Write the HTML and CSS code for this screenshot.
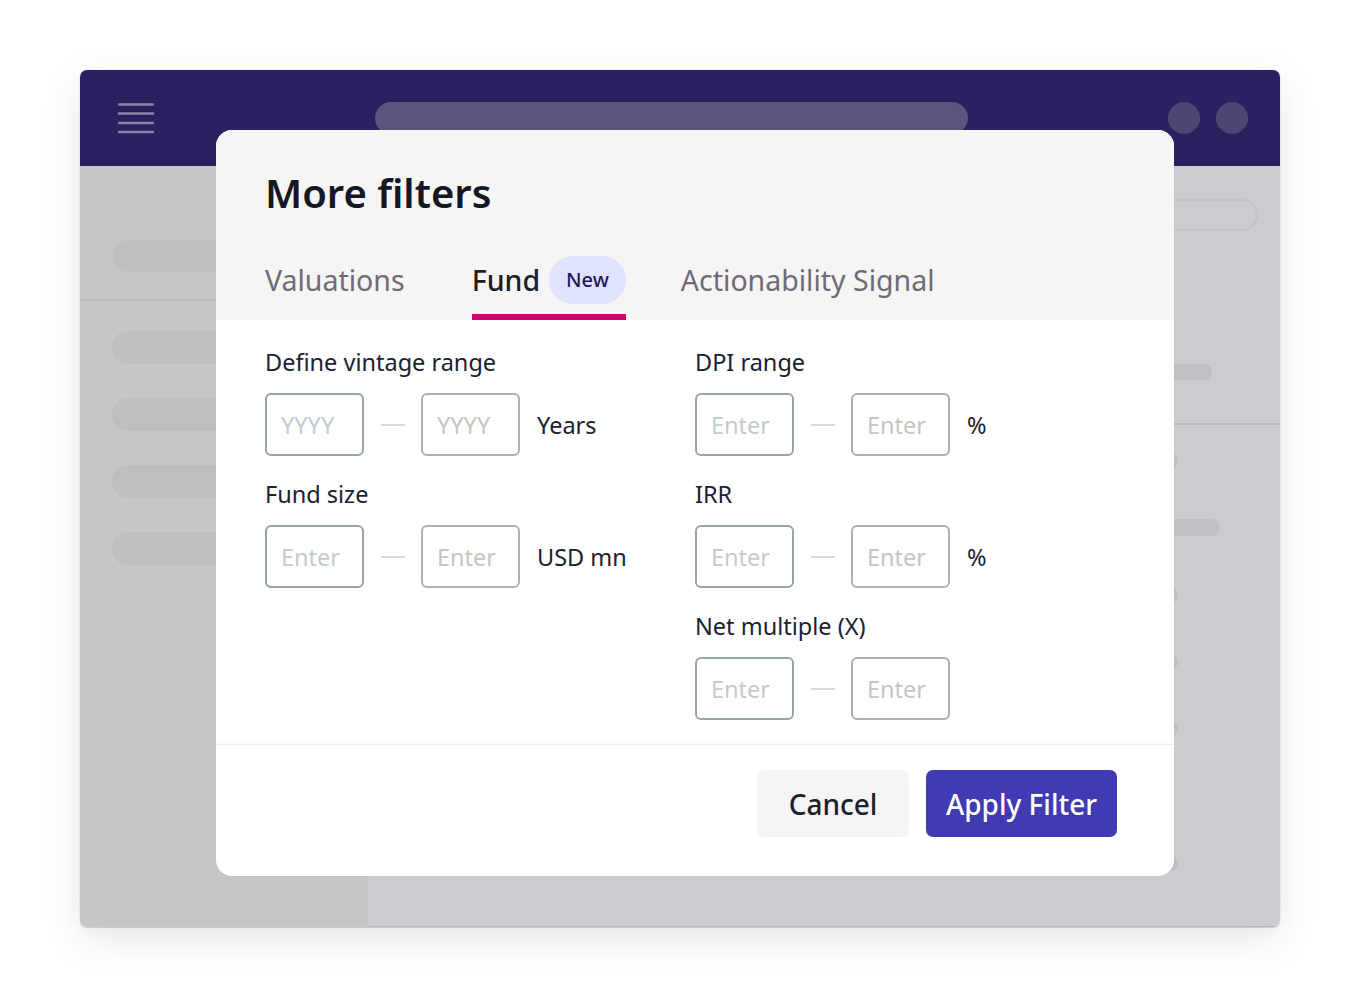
FILE: index.html
```html
<!DOCTYPE html>
<html lang="en">
<head>
    <meta charset="UTF-8">
    <meta name="viewport" content="width=device-width, initial-scale=1.0">
    <title>More filters</title>
    <link rel="stylesheet" href="styles.css">
</head>
<body>
    <div class="app-frame">
        <div class="topbar">
            <svg class="menu-icon" width="36" height="31" viewBox="0 0 36 31">
                <g stroke="#8b83a9" stroke-width="2.4">
                    <line x1="0" y1="1.5" x2="36" y2="1.5"/>
                    <line x1="0" y1="10.5" x2="36" y2="10.5"/>
                    <line x1="0" y1="20" x2="36" y2="20"/>
                    <line x1="0" y1="29" x2="36" y2="29"/>
                </g>
            </svg>
            <div class="search-pill"></div>
            <div class="avatars">
                <span class="avatar"></span>
                <span class="avatar"></span>
            </div>
        </div>

        <div class="app-body">
            <aside class="sidebar">
                <div class="side-pill"></div>
                <div class="side-divider"></div>
                <div class="side-list">
                    <div class="side-pill"></div>
                    <div class="side-pill"></div>
                    <div class="side-pill"></div>
                    <div class="side-pill"></div>
                </div>
            </aside>
            <main class="main">
                <div class="main-head">
                    <div class="outline-pill"></div>
                    <div class="head-pill"></div>
                </div>
                <div class="main-divider"></div>
                <div class="rows">
                    <div class="row"><span class="row-pill"></span></div>
                    <div class="row"><span class="row-pill wide"></span></div>
                    <div class="row"><span class="row-pill"></span></div>
                    <div class="row"><span class="row-pill"></span></div>
                    <div class="row"><span class="row-pill"></span></div>
                    <div class="row"></div>
                    <div class="row"><span class="row-pill"></span></div>
                </div>
            </main>
        </div>

        <div class="modal">
            <div class="modal-header">
                <h1>More filters</h1>
                <div class="tabs">
                    <div class="tab">Valuations</div>
                    <div class="tab active">Fund <span class="badge">New</span></div>
                    <div class="tab">Actionability Signal</div>
                </div>
            </div>

            <div class="modal-body">
                <div class="column">
                    <div class="field">
                        <label>Define vintage range</label>
                        <div class="range">
                            <input class="box from" type="text" placeholder="YYYY">
                            <span class="dash"></span>
                            <input class="box to" type="text" placeholder="YYYY">
                            <span class="unit">Years</span>
                        </div>
                    </div>
                    <div class="field">
                        <label>Fund size</label>
                        <div class="range">
                            <input class="box from" type="text" placeholder="Enter">
                            <span class="dash"></span>
                            <input class="box to" type="text" placeholder="Enter">
                            <span class="unit">USD mn</span>
                        </div>
                    </div>
                </div>
                <div class="column">
                    <div class="field">
                        <label>DPI range</label>
                        <div class="range">
                            <input class="box from" type="text" placeholder="Enter">
                            <span class="dash"></span>
                            <input class="box to" type="text" placeholder="Enter">
                            <span class="unit">%</span>
                        </div>
                    </div>
                    <div class="field">
                        <label>IRR</label>
                        <div class="range">
                            <input class="box from" type="text" placeholder="Enter">
                            <span class="dash"></span>
                            <input class="box to" type="text" placeholder="Enter">
                            <span class="unit">%</span>
                        </div>
                    </div>
                    <div class="field">
                        <label>Net multiple (X)</label>
                        <div class="range">
                            <input class="box from" type="text" placeholder="Enter">
                            <span class="dash"></span>
                            <input class="box to" type="text" placeholder="Enter">
                        </div>
                    </div>
                </div>
            </div>

            <div class="modal-footer">
                <button class="btn cancel">Cancel</button>
                <button class="btn apply">Apply Filter</button>
            </div>
        </div>
    </div>
</body>
</html>
```

FILE: styles.css
```css
* {
    margin: 0;
    padding: 0;
    box-sizing: border-box;
}

body {
    font-family: 'Noto Sans', 'Open Sans', sans-serif;
    background: #fff;
    padding: 70px 80px;
    color: #1d2030;
}

.app-frame {
    position: relative;
    width: 1200px;
    height: 857px;
    border-radius: 7px;
    box-shadow: 0 0 0 1px rgba(0, 0, 0, 0.04), 0 1px 1px rgba(0, 0, 0, 0.12), 0 12px 40px rgba(0, 0, 0, 0.1);
    display: flex;
    flex-direction: column;
}

/* top bar */
.topbar {
    height: 96px;
    background: #2d2060;
    border-radius: 7px 7px 0 0;
    display: flex;
    align-items: center;
    padding: 0 32px 0 38px;
}

.menu-icon {
    display: block;
    margin-right: 221px;
}

.search-pill {
    width: 593px;
    height: 32px;
    border-radius: 16px;
    background: #5d547c;
}

.avatars {
    margin-left: auto;
    display: flex;
    gap: 16px;
}

.avatar {
    width: 32px;
    height: 32px;
    border-radius: 50%;
    background: #4e4574;
}

/* app content behind the modal */
.app-body {
    flex: 1;
    display: flex;
    border-radius: 0 0 7px 7px;
    overflow: hidden;
}

.sidebar {
    width: 288px;
    background: #c6c6c8;
    padding-top: 74px;
}

.sidebar > .side-pill {
    margin-left: 32px;
}

.side-pill {
    width: 220px;
    height: 32px;
    border-radius: 16px;
    background: #c0bec1;
}

.side-divider {
    height: 2px;
    background: #bab6b9;
    margin-top: 27px;
}

.side-list {
    padding: 30px 0 0 32px;
    display: flex;
    flex-direction: column;
    gap: 34px;
}

.side-list .side-pill {
    height: 33px;
}

.main {
    flex: 1;
    background: #cbccd0;
    border-bottom: 1px solid #b7b7bb;
}

.main-head {
    height: 257px;
    display: flex;
    flex-direction: column;
    align-items: flex-end;
    padding-top: 33px;
}

.outline-pill {
    width: 320px;
    height: 32px;
    border: 2px solid #c5c2c6;
    border-radius: 16px;
    margin-right: 22px;
}

.head-pill {
    width: 200px;
    height: 16px;
    border-radius: 8px;
    background: #c1bfc3;
    margin-top: 133px;
    margin-right: 68px;
}

.main-divider {
    height: 2px;
    background: #bcb8bb;
}

.rows {
    padding-top: 2px;
}

.row {
    height: 67px;
    display: flex;
    align-items: center;
    justify-content: flex-end;
}

.row-pill {
    width: 200px;
    height: 18px;
    border-radius: 9px;
    background: #c1bfc3;
    margin-right: 102px;
}

.row-pill.wide {
    height: 17px;
    margin-right: 60px;
}

/* modal */
.modal {
    position: absolute;
    left: 136px;
    top: 60px;
    width: 958px;
    background: #fff;
    border-radius: 16px;
    overflow: hidden;
}

.modal-header {
    background: #f6f5f3;
    padding: 37px 49px 0;
}

.modal-header h1 {
    font-size: 40px;
    line-height: 52px;
    font-weight: 600;
    color: #141826;
}

.tabs {
    display: flex;
    gap: 55px;
    margin-top: 37px;
}

.tab {
    height: 64px;
    display: flex;
    align-items: center;
    padding-bottom: 10px;
    border-bottom: 6px solid transparent;
    font-size: 28.5px;
    line-height: 36px;
    color: #6d6b7a;
}

.tab:first-child {
    margin-right: 12px;
}

.tab.active {
    color: #1a1d2c;
    font-weight: 500;
    border-bottom-color: #d5006f;
}

.badge {
    display: inline-flex;
    align-items: center;
    height: 48px;
    padding: 0 17px;
    margin-left: 9px;
    border-radius: 24px;
    background: #e0e3fd;
    color: #1d175b;
    font-size: 20px;
    font-weight: 500;
}

.modal-body {
    display: grid;
    grid-template-columns: 430px 1fr;
    padding: 27px 49px 24px;
}

.column {
    display: flex;
    flex-direction: column;
    gap: 23px;
}

.field label {
    display: block;
    font-size: 23.5px;
    line-height: 30px;
    color: #1d2030;
    margin-bottom: 16px;
}

.range {
    display: flex;
    align-items: center;
}

.box {
    width: 99px;
    height: 63px;
    border: 2px solid #97a4ac;
    border-radius: 6px;
    padding: 0 14px;
    font-family: inherit;
    font-size: 23.5px;
    color: #1d2030;
    background: #fff;
}

.box.to {
    border-color: #b5afa9;
}

.box::placeholder {
    color: #c3cbd0;
}

.box.to::placeholder {
    color: #c9c4c0;
}

.dash {
    width: 24px;
    height: 2px;
    background: #d7dadb;
    margin: 0 16px 0 17px;
}

.unit {
    margin-left: 17px;
    font-size: 23.5px;
    color: #1d2030;
}

.modal-footer {
    display: flex;
    justify-content: flex-end;
    gap: 17px;
    padding: 25px 57px 39px;
    border-top: 1px solid #eeeeee;
    box-shadow: 0 -2px 4px rgba(0, 0, 0, 0.02);
}

.btn {
    height: 67px;
    border: none;
    border-radius: 7px;
    font-family: inherit;
    font-size: 28px;
    font-weight: 500;
    cursor: pointer;
}

.btn.cancel {
    width: 152px;
    background: #f5f4f2;
    color: #1c1f2b;
}

.btn.apply {
    width: 191px;
    background: #403ab3;
    color: #fff;
}
```
